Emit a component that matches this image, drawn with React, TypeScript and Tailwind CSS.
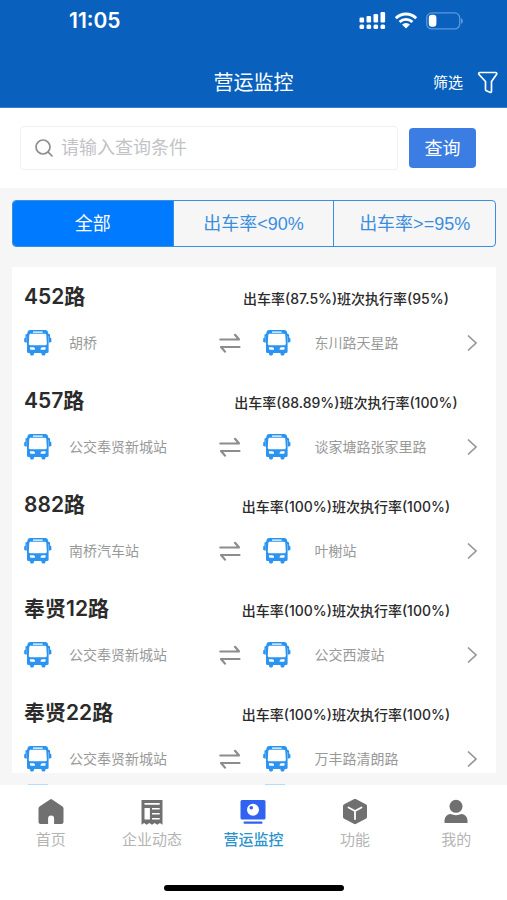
import React from "react";

const routes = [
  { name: "452路", rate: "出车率(87.5%)班次执行率(95%)", from: "胡桥", to: "东川路天星路" },
  { name: "457路", rate: "出车率(88.89%)班次执行率(100%)", from: "公交奉贤新城站", to: "谈家塘路张家里路" },
  { name: "882路", rate: "出车率(100%)班次执行率(100%)", from: "南桥汽车站", to: "叶榭站" },
  { name: "奉贤12路", rate: "出车率(100%)班次执行率(100%)", from: "公交奉贤新城站", to: "公交西渡站" },
  { name: "奉贤22路", rate: "出车率(100%)班次执行率(100%)", from: "公交奉贤新城站", to: "万丰路清朗路" },
];

function BusIcon() {
  return (
    <svg viewBox="0 0 28 28" className="h-7 w-7 shrink-0" fill="#2b93f0" aria-hidden="true">
      <path
        fillRule="evenodd"
        d="M6 1h15.500a2.500 2.500 0 0 1 2.400 1.800L24.600 6v16.500a1.500 1.500 0 0 1-1.500 1.500h-1.300l-.6 1.800a1 1 0 0 1-1 .7h-1.400a1 1 0 0 1-1-.7L17.300 24h-7l-.6 1.800a1 1 0 0 1-1 .7H7.300a1 1 0 0 1-1-.7L5.700 24H4.500A1.500 1.500 0 0 1 3 22.500V6l.6-3.200A2.500 2.500 0 0 1 6 1zM9 2.600v1.200h9.600V2.600zM6.800 4.800a1.500 1.500 0 0 0-1.500 1.300L4.800 14.500A1.500 1.500 0 0 0 6.300 16.200h15a1.500 1.500 0 0 0 1.500-1.700l-.5-8.400a1.500 1.500 0 0 0-1.500-1.300zM6 18.200v1.600a1 1 0 0 0 1 1h4v-.8a1.800 1.800 0 0 0-1.800-1.800zM21.600 18.200h-3.200a1.800 1.800 0 0 0-1.800 1.800v.8h4a1 1 0 0 0 1-1z"
      />
      <path d="M4 4.500L1.500 5.500v3L.2 9.500v3.500l2.600.8V7.500L4 6.500zM23.600 4.500l2.500 1v3l1.300 1v3.500l-2.600.8V7.500l-1.200-1z" />
    </svg>
  );
}

function SwapIcon() {
  return (
    <svg viewBox="0 0 22 20" className="h-5 w-[22px] shrink-0" fill="none" stroke="#8c8c8c" strokeWidth="2.200" strokeLinecap="round" strokeLinejoin="round" aria-hidden="true">
      <path d="M1.300 6.500H20L16 1.800M20.500 14H2L6 18.600" />
    </svg>
  );
}

function Chevron() {
  return (
    <svg viewBox="0 0 12 18" className="ml-auto h-[18px] w-3 shrink-0" fill="none" stroke="#969696" strokeWidth="1.700" aria-hidden="true">
      <path d="M2 1.500L10 9L2 16.500" />
    </svg>
  );
}

function StatusBar() {
  return (
    <div className="flex h-[42px] items-center justify-between pr-11 pl-[69px] text-white">
      <span className="text-[21px] leading-6 font-semibold">11:05</span>
      <div className="flex items-center gap-2">
        <svg viewBox="0 0 27 18" className="h-[18px] w-[27px]" fill="#fff" aria-hidden="true">
          <rect x="0.500" y="5.500" width="4.600" height="5" rx="1.200" />
          <rect x="7.500" y="4" width="4.600" height="6.500" rx="1.200" />
          <rect x="14.500" y="2" width="4.600" height="8.500" rx="1.200" />
          <rect x="21.500" y="0" width="4.600" height="10.500" rx="1.200" />
          <rect x="0.500" y="12.500" width="4.600" height="4.600" rx="1.500" />
          <rect x="7.500" y="12.500" width="4.600" height="4.600" rx="1.500" />
          <rect x="14.500" y="12.500" width="4.600" height="4.600" rx="1.500" />
          <rect x="21.500" y="12.500" width="4.600" height="4.600" rx="1.500" />
        </svg>
        <svg viewBox="0 0 24 18" className="h-[18px] w-6" fill="none" stroke="#fff" strokeWidth="2.800" aria-hidden="true">
          <path d="M1.800 6.200a14.500 14.500 0 0 1 20.400 0M5.600 10.100a9 9 0 0 1 12.800 0" />
          <path d="M12 16.600L8 12.600a5.700 5.700 0 0 1 8 0z" fill="#fff" stroke="none" />
        </svg>
        <svg viewBox="0 0 37 18" className="h-[18px] w-[37px]" aria-hidden="true">
          <rect x="0.700" y="0.900" width="33" height="16" rx="5" fill="none" stroke="#5c98da" strokeWidth="1.300" />
          <rect x="2.800" y="2.800" width="7.600" height="12" rx="3" fill="#fff" />
          <path d="M35 6v6a3.300 3.300 0 0 0 0-6z" fill="#5c98da" />
        </svg>
      </div>
    </div>
  );
}

const tabIcons: Record<string, React.ReactNode> = {
  home: <path d="M13.100 1.400a2 2 0 0 1 2 0L25.500 8.500a2.500 2.500 0 0 1 1 2V24a2 2 0 0 1-2 2h-7.400v-5.500a3 3 0 0 0-6 0V26H3.500a2 2 0 0 1-2-2V10.500a2.500 2.500 0 0 1 1-2z" />,
  news: (
    <path
      fillRule="evenodd"
      d="M3.500 2h21v24.800l-2.600-1.800-2.600 1.800-2.700-1.800-2.600 1.800-2.700-1.800-2.600 1.800L6.100 25l-2.600 1.800zM6.500 5v1.700h15.200V5zM6.500 10v11.500h5.400V10zM14 10v1.600h7.700V10zM14 14.900v1.600h7.700v-1.600zM14 19.900v1.600h7.700v-1.600z"
    />
  ),
  monitor: (
    <>
      <path fillRule="evenodd" d="M3 2h22a1.500 1.500 0 0 1 1.500 1.500v16.500a1.500 1.500 0 0 1-1.500 1.500H3a1.500 1.500 0 0 1-1.500-1.500V3.500A1.500 1.500 0 0 1 3 2zM14 5.800a6 6 0 1 0 0 12 6 6 0 0 0 0-12z" />
      <circle cx="12.300" cy="9.800" r="1.800" />
      <rect x="4.500" y="23.600" width="19" height="2.200" rx="1" />
    </>
  ),
  cube: (
    <>
      <path d="M12.800 1.200a2.400 2.400 0 0 1 2.400 0l9.600 5a2 2 0 0 1 1.200 1.800v11a2 2 0 0 1-1.200 1.800l-9.600 5a2.400 2.400 0 0 1-2.400 0l-9.600-5A2 2 0 0 1 2 19V8a2 2 0 0 1 1.200-1.800z" />
      <path d="M7.500 9.500L14 13l6.500-3.500M14 13v8" fill="none" stroke="#fff" strokeWidth="1.800" strokeLinecap="round" />
    </>
  ),
  user: (
    <>
      <circle cx="14" cy="8.300" r="6.500" />
      <path d="M2.500 25v-2.500a6.500 6.500 0 0 1 6-6.500c3.300 1.500 7.700 1.500 11 0a6.500 6.500 0 0 1 6 6.500V25z" />
    </>
  ),
};

const tabs = [
  { label: "首页", icon: "home" },
  { label: "企业动态", icon: "news" },
  { label: "营运监控", icon: "monitor", active: true },
  { label: "功能", icon: "cube" },
  { label: "我的", icon: "user" },
];

export default function App() {
  return (
    <div className="flex min-h-screen flex-col bg-[#f6f6f6] font-[Inter,'Noto_Sans_CJK_SC',sans-serif] text-[#2b2b2b]">
      <header className="border-b border-[#3a7ec6] bg-[#0961bd]">
        <StatusBar />
        <div className="grid h-[65px] grid-cols-[1fr_auto_1fr] items-center pt-4 text-white">
          <h1 className="col-start-2 text-[20px] leading-7">营运监控</h1>
          <button type="button" className="mr-2 flex items-center gap-3.5 justify-self-end text-[15px] leading-6">
            筛选
            <svg viewBox="0 0 22 24" className="h-6 w-[22px]" fill="none" stroke="#fff" strokeWidth="1.700" strokeLinejoin="round" aria-hidden="true">
              <path d="M3 1.500h15.500a1.200 1.200 0 0 1 1 2L14.500 10.500v9.800a1 1 0 0 1-1.500.9l-3.700-1.500a1.200 1.200 0 0 1-.8-1.100v-8.100L2 3.500a1.200 1.200 0 0 1 1-2z" />
            </svg>
          </button>
        </div>
      </header>

      <form className="flex items-center gap-[11px] bg-white py-[18px] pr-[31px] pl-5" onSubmit={(e) => e.preventDefault()}>
        <label className="flex h-11 min-w-0 flex-1 items-center gap-2 rounded border border-[#f1f1f1] pl-3.5">
          <svg viewBox="0 0 18 18" className="h-[18px] w-[18px] shrink-0" fill="none" stroke="#8e8e8e" strokeWidth="1.700" strokeLinecap="round" aria-hidden="true">
            <circle cx="8" cy="8" r="7" />
            <path d="M13.200 13.200L17 17" />
          </svg>
          <input
            type="search"
            aria-label="查询条件"
            placeholder="请输入查询条件"
            className="min-w-0 flex-1 bg-transparent text-[18px] leading-6 outline-none placeholder:text-[#c3c3c7]"
          />
        </label>
        <button type="submit" className="h-10 w-[67px] rounded bg-[#3b7de3] text-[18px] text-white">
          查询
        </button>
      </form>

      <main className="flex-1 pt-3 pr-[11px] pl-3">
        <div className="grid h-[47px] grid-cols-3 divide-x divide-[#3a8ee0] overflow-hidden rounded border border-[#3a8ee0] font-['Liberation_Sans','Noto_Sans_CJK_SC',sans-serif] text-[18px] text-[#3a8ee0]">
          <button type="button" className="bg-[#007aff] pt-0.5 text-white">全部</button>
          <button type="button" className="pt-0.5">出车率&lt;90%</button>
          <button type="button" className="pt-0.5">出车率&gt;=95%</button>
        </div>

        <ul className="mt-5 flex flex-col gap-[30px] bg-white pt-4">
          {routes.map((r) => (
            <li key={r.name}>
              <div className="grid h-7 grid-cols-[38fr_62fr] items-center">
                <h2 className="pl-3 text-[21px] leading-7 font-semibold whitespace-nowrap">{r.name}</h2>
                <p className="pt-1 text-center text-[14px] leading-6 font-medium whitespace-nowrap">{r.rate}</p>
              </div>
              <a href="#" className="mt-[18px] grid h-7 grid-cols-[3fr_4fr] items-center pr-[18px] pl-3 text-[14px] leading-6 text-[#999]">
                <span className="flex items-center gap-[17px]">
                  <BusIcon />
                  {r.from}
                </span>
                <span className="flex items-center">
                  <SwapIcon />
                  <span className="ml-[22px] flex items-center gap-6 whitespace-nowrap">
                    <BusIcon />
                    {r.to}
                  </span>
                  <Chevron />
                </span>
              </a>
            </li>
          ))}
        </ul>
        <div className="grid h-3 grid-cols-[3fr_4fr] items-end pr-[18px] pl-4" aria-hidden="true">
          <span className="h-px w-5 bg-[#b5dcf8]" />
          <span className="ml-11 h-px w-5 bg-[#b5dcf8]" />
        </div>
      </main>

      <footer className="bg-white pt-[13px] pb-[9px]">
        <nav className="grid grid-cols-5">
          {tabs.map((t) => (
            <a
              key={t.label}
              href="#"
              className={
                t.active
                  ? "flex flex-col items-center gap-0.5 text-[15px] leading-6 font-medium text-[#2b93cb]"
                  : "flex flex-col items-center gap-0.5 text-[15px] leading-6 text-[#b4b4b4]"
              }
            >
              <svg viewBox="0 0 28 28" className="h-7 w-7" fill={t.active ? "#2f63f0" : "#707070"} aria-hidden="true">
                {tabIcons[t.icon]}
              </svg>
              {t.label}
            </a>
          ))}
        </nav>
        <div className="mx-auto mt-[33px] h-1.5 w-[180px] rounded-full bg-black" />
      </footer>
    </div>
  );
}
